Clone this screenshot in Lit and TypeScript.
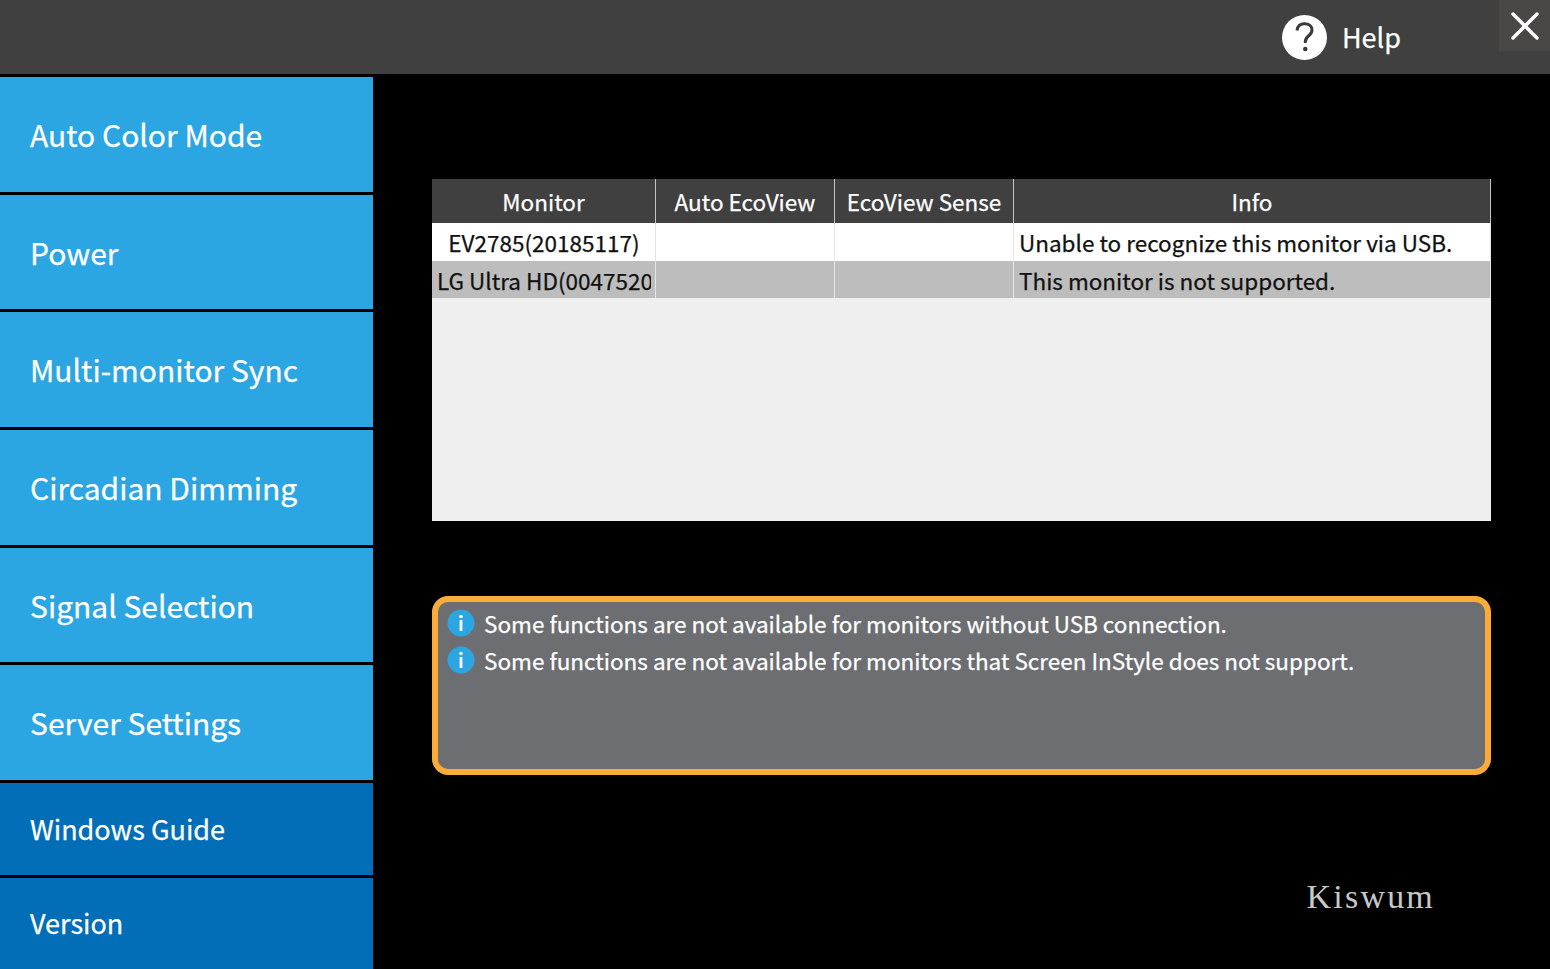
import { LitElement, html, css } from "lit";
import { customElement } from "lit/decorators.js";

const nav = ["Auto Color Mode", "Power", "Multi-monitor Sync", "Circadian Dimming", "Signal Selection", "Server Settings"];
const nav2 = ["Windows Guide", "Version"];
const msgs = [
  "Some functions are not available for monitors without USB connection.",
  "Some functions are not available for monitors that Screen InStyle does not support.",
];

@customElement("app-root")
export class AppRoot extends LitElement {
  static styles = css`
    :host { display: block; width: 1550px; height: 969px; background: #000; overflow: hidden;
      font-family: "Noto Sans CJK JP", "Noto Sans", sans-serif; -webkit-text-stroke: 0.25px currentColor; }
    .top { height: 74px; background: #404040; display: flex; justify-content: flex-end; align-items: flex-start; }
    .help { display: flex; align-items: center; height: 74px; gap: 15px; margin-right: 98px; color: #fff; font-size: 27px; }
    .help span { padding-bottom: 1px; }
    .help svg { display: block; }
    .close { width: 51px; height: 51px; background: #4a4846; display: flex; align-items: center; justify-content: center; }
    .main { display: flex; height: 895px; }
    .side { width: 373px; padding-top: 3px; display: flex; flex-direction: column; flex: none; }
    .item { height: 114.7px; margin-bottom: 3px; background: #2ca6e2; color: #fff; font-size: 30px; display: flex; align-items: center; padding: 0 0 1px 30px; box-sizing: border-box; }
    .item.dark { background: #026eb8; font-size: 27px; height: 92px; }
    .item.dark:last-child { height: 91px; margin-bottom: 0; padding-bottom: 2px; }
    .content { flex: 1; padding: 105px 59px 0 59px; display: flex; flex-direction: column; }
    .table { height: 342px; background: #efefef; display: flex; flex-direction: column; }
    .row { display: grid; grid-template-columns: 224px 179px 179px 1fr; }
    .row > div { box-sizing: border-box; border-right: 1px solid #e4e4e4; white-space: nowrap; color: #111; font-size: 22.5px; display: flex; align-items: center; }
    .row.head { height: 44px; background: #404040; }
    .row.head > div { color: #fff; justify-content: center; border-right-color: #c4c4c4; }
    .row.a { height: 38px; background: #fff; }
    .row.b { height: 37px; background: #bdbdbd; }
    .row .mon { padding: 0 4px 0 5px; }
    .row .mon span { display: block; overflow: hidden; width: 100%; }
    .row .mon.ctr span { text-align: center; }
    .row .info { padding-left: 5px; }
    .note { margin-top: 75px; height: 179px; box-sizing: border-box; border: 6px solid #fbab38; border-radius: 16px; background: #6d6e71; padding: 2px 9px; color: #fff; font-size: 22.5px; }
    .msg { display: flex; align-items: center; height: 37px; gap: 9px; }
    .msg svg { flex: none; display: block; }
    .mark { margin: 102px 56px 0 0; text-align: right; color: #c8c8c8; font-family: "Liberation Serif", serif; font-size: 34px; letter-spacing: 2.2px; line-height: 40px; -webkit-text-stroke: 0; }
  `;

  render() {
    return html`
      <div class="top">
        <div class="help">
          <svg width="45" height="45" viewBox="0 0 45 45">
            <circle cx="22.5" cy="22.5" r="22.5" fill="#fff" />
            <path d="M15 15.5c.5-4.5 3.7-6.8 7.6-6.8 4.300 0 7.400 2.600 7.400 6.300 0 2.800-1.500 4.400-3.500 6-2 1.600-3.200 3-3.200 5.800v1.200" fill="none" stroke="#3a3a3a" stroke-width="3" />
            <circle cx="23.300" cy="34" r="2.300" fill="#3a3a3a" />
          </svg>
          <span>Help</span>
        </div>
        <div class="close">
          <svg width="30" height="30" viewBox="0 0 30 30"><path d="M3 3 27 27M27 3 3 27" stroke="#fff" stroke-width="3.400" stroke-linecap="round" /></svg>
        </div>
      </div>
      <div class="main">
        <div class="side">
          ${nav.map((n) => html`<div class="item">${n}</div>`)}
          ${nav2.map((n) => html`<div class="item dark">${n}</div>`)}
        </div>
        <div class="content">
          <div class="table">
            <div class="row head"><div>Monitor</div><div>Auto EcoView</div><div>EcoView Sense</div><div>Info</div></div>
            <div class="row a"><div class="mon ctr"><span>EV2785(20185117)</span></div><div></div><div></div><div class="info">Unable to recognize this monitor via USB.</div></div>
            <div class="row b"><div class="mon"><span>LG Ultra HD(00475201)</span></div><div></div><div></div><div class="info">This monitor is not supported.</div></div>
          </div>
          <div class="note">
            ${msgs.map((m) => html`<div class="msg">
              <svg width="28" height="28" viewBox="0 0 28 28">
                <circle cx="14" cy="14" r="13.500" fill="#2ca6e2" />
                <circle cx="14" cy="7.500" r="1.800" fill="#fff" />
                <rect x="12.600" y="11" width="2.800" height="11" fill="#fff" />
              </svg>
              <span>${m}</span>
            </div>`)}
          </div>
          <div class="mark">Kiswum</div>
        </div>
      </div>
    `;
  }
}
